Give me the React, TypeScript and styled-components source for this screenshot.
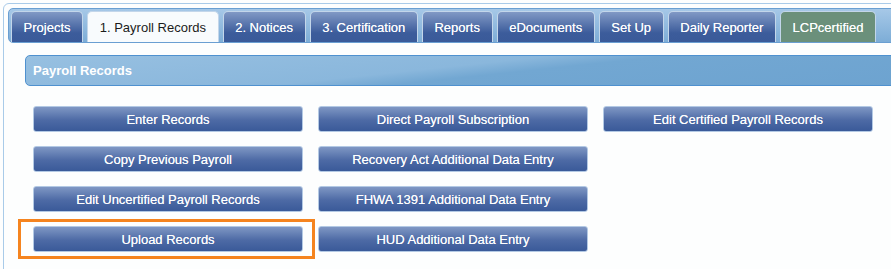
import React from 'react'
import styled, { createGlobalStyle } from 'styled-components'

const GlobalStyle = createGlobalStyle`
body {
    margin: 0;
    background: #fdfefe;
    overflow: hidden;
    font-family: "Liberation Sans", Arial, sans-serif;
}
`

const Frame = styled.div`
margin: 3px 0 0 3px;
width: 910px;
height: 264px;
border: 1px solid #a9cbe9;
border-radius: 6px;
padding: 4px;
background: #fdfefe;
`

const TabBar = styled.div`
height: 33px;
display: flex;
align-items: flex-end;
gap: 4px;
padding-left: 2px;
border: 1px solid #6a9fd2;
border-radius: 5px;
background: linear-gradient(#a6c8e7, #7dadd7);
`

const Tab = styled.div<{ $kind?: 'active' | 'green' }>`
height: 30px;
padding: 0 11.6px;
display: flex;
align-items: center;
font-size: 13px;
border: 1px solid #c3d6ea;
border-bottom: none;
border-radius: 5px 5px 0 0;
color: ${p => (p.$kind === 'active' ? '#1b1b1b' : '#ffffff')};
text-shadow: ${p => (p.$kind === 'active' ? 'none' : '0 0 0.6px rgba(255, 255, 255, 0.8)')};
background: ${p =>
    p.$kind === 'active'
        ? '#f8fbfd'
        : p.$kind === 'green'
        ? '#6b907b'
        : 'linear-gradient(#8199c5, #3c5c9b 70%, #3a5a99)'};
`

const Content = styled.div`
padding: 12px 0 0 17px;
`

const Header = styled.div`
height: 29px;
display: flex;
align-items: center;
padding-left: 7px;
border: 1px solid #4f91cf;
border-radius: 5px 0 0 5px;
color: #ffffff;
font-size: 13px;
font-weight: bold;
background: linear-gradient(174deg, #97c0e1 0%, #8ab7dc 45%, #72a7d2 55%, #6da3d0 100%);
`

const Columns = styled.div`
display: flex;
gap: 15px;
padding: 20px 0 0 8px;
`

const Column = styled.div`
display: flex;
flex-direction: column;
gap: 14px;
`

const Button = styled.div<{ $highlight?: boolean }>`
position: relative;
width: 268px;
height: 24px;
display: flex;
align-items: center;
justify-content: center;
color: #ffffff;
font-size: 13px;
border: 1px solid #b3c9e4;
border-radius: 3px;
background: linear-gradient(#7f97c4, #4d6aa5 55%, #3a5a99);
text-shadow: 0 0 0.6px rgba(255, 255, 255, 0.8);
cursor: pointer;

${p =>
    p.$highlight &&
    `
    &::after {
        content: '';
        position: absolute;
        top: -8px;
        left: -16px;
        right: -13px;
        bottom: -8px;
        border: 3px solid #f5841f;
    }
`}
`

const tabs = ['Projects', '1. Payroll Records', '2. Notices', '3. Certification', 'Reports', 'eDocuments', 'Set Up', 'Daily Reporter']

const columns = [
    ['Enter Records', 'Copy Previous Payroll', 'Edit Uncertified Payroll Records', 'Upload Records'],
    ['Direct Payroll Subscription', 'Recovery Act Additional Data Entry', 'FHWA 1391 Additional Data Entry', 'HUD Additional Data Entry'],
    ['Edit Certified Payroll Records'],
]

const App = () => {
    return (
        <>
            <GlobalStyle />
            <Frame>
                <TabBar>
                    {tabs.map(t => (
                        <Tab key={t} $kind={t === '1. Payroll Records' ? 'active' : undefined}>
                            {t}
                        </Tab>
                    ))}
                    <Tab $kind="green">LCPcertified</Tab>
                </TabBar>
                <Content>
                    <Header>Payroll Records</Header>
                    <Columns>
                        {columns.map((col, i) => (
                            <Column key={i}>
                                {col.map(b => (
                                    <Button key={b} $highlight={b === 'Upload Records'}>
                                        {b}
                                    </Button>
                                ))}
                            </Column>
                        ))}
                    </Columns>
                </Content>
            </Frame>
        </>
    )
}

export default App
